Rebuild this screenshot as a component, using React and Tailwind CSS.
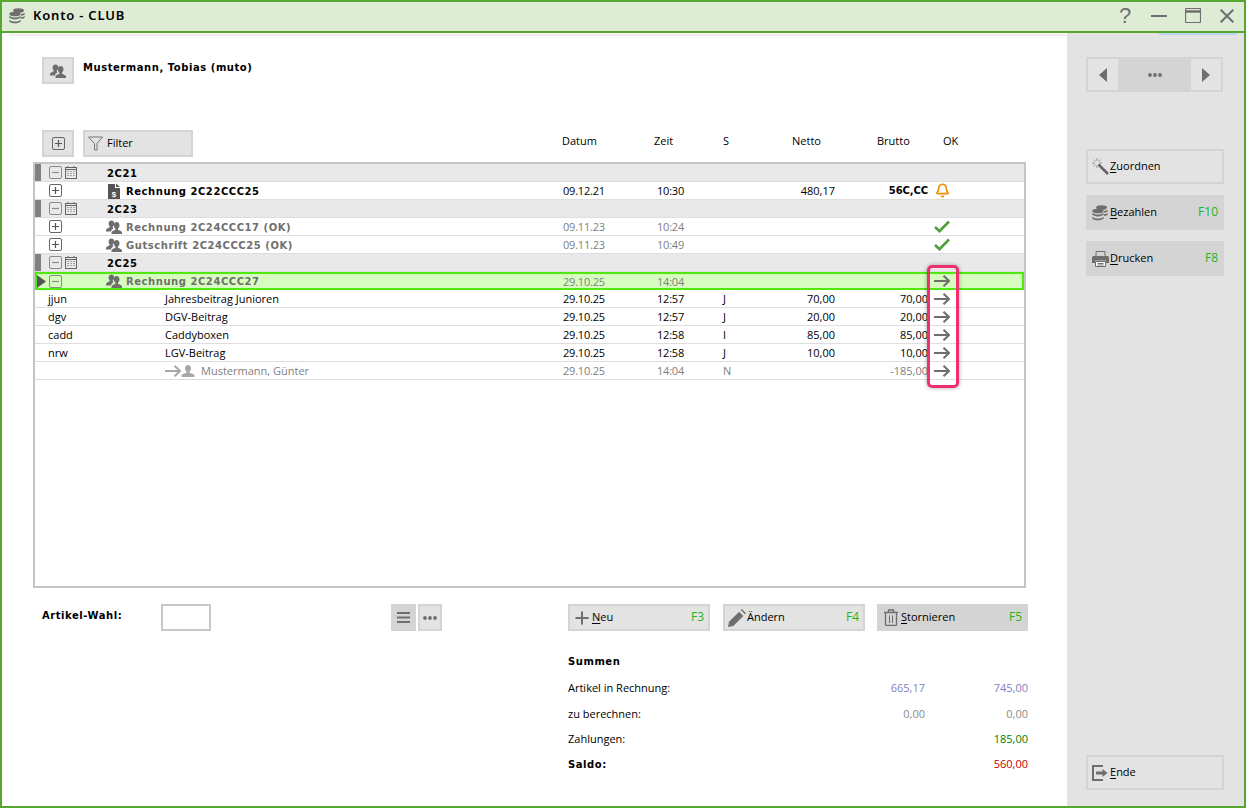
import React from 'react';
import { Bell, Plus } from 'lucide-react';

const G = '#6e6e6e';
const BOLD = "inline-block pt-[2px] font-['DejaVu_Sans',sans-serif] font-bold text-[10px] tracking-[0.55px]";

const Coins = ({ size = 16 }) => (
    <svg width={size} height={size} viewBox="0 0 16 16" fill={G}>
        <ellipse cx="9.500" cy="2.500" rx="5.500" ry="2.300" />
        <path d="M12 6c2-.2 3.300-.8 3.700-1.500v1.800c-.4.700-1.700 1.300-3.700 1.500zM12 9.200c2-.2 3.300-.8 3.700-1.500v1.800c-.4.700-1.700 1.300-3.700 1.500z" />
        <ellipse cx="6" cy="6" rx="5.700" ry="2.300" />
        <path d="M.3 7.800c.9 1.100 3 1.800 5.700 1.800s4.800-.7 5.700-1.800v1.800c-.9 1.100-3 1.800-5.700 1.800S1.200 10.700.3 9.600zM.3 11.700c.9 1.100 3 1.800 5.700 1.800s4.800-.7 5.700-1.800v1.800c-.9 1.100-3 1.800-5.700 1.800S1.200 14.600.3 13.500z" />
    </svg>
);

const Persons = ({ size = 16, color = G }) => (
    <svg width={size} height={size} viewBox="0 0 16 16" fill={color}>
        <path d="M5.500 1.500c1.700 0 2.700 1.300 2.700 3 0 1.300-.6 2.500-1.400 3.100v1.100l.9.5c-1.300.6-2.300 1.500-2.700 3.300H0v-1.600c0-1 2.300-1.800 3.800-2.600V7.600C3 7 2.600 5.800 2.600 4.500c0-1.700 1.200-3 2.900-3z" />
        <path d="M10.500 3c1.900 0 3 1.400 3 3.200 0 1.400-.6 2.700-1.500 3.300v1.300c1.500.7 4 1.400 4 2.700V15H5.500v-1.500c0-1.300 2.400-2 3.900-2.700V9.500c-.9-.6-1.600-1.900-1.600-3.300 0-1.800 1.100-3.200 2.700-3.200z" />
    </svg>
);

const Person = () => (
    <svg width="14" height="14" viewBox="0 0 14 14" fill="#a8a8a8">
        <path d="M7 1c1.900 0 3 1.400 3 3.200 0 1.400-.6 2.700-1.500 3.300v1.300c1.500.7 5 1.200 5 2.700V13H.5v-1.500c0-1.500 3.500-2 5-2.700V7.500C4.600 6.900 4 5.600 4 4.200 4 2.400 5.100 1 7 1z" />
    </svg>
);

const Invoice = () => (
    <svg width="12" height="16" viewBox="0 0 12 16">
        <path d="M0 1h7v4h5v11H0z" fill="#555" />
        <path d="M8 0.500l4 3.500H8z" fill="#555" />
        <text x="6" y="13.500" fontSize="8" fontWeight="700" textAnchor="middle" fill="#fff" fontFamily="Liberation Sans, sans-serif">$</text>
    </svg>
);

const Calendar = () => (
    <svg width="12" height="13" viewBox="0 0 12 13" fill="none" stroke="#666">
        <rect x="0.500" y="1.500" width="11" height="11" />
        <path d="M0.500 3.500h11M3 0v2M9 0v2" />
        <path d="M2.500 5.500h1M5.500 5.500h1M8.500 5.500h1M2.500 7.500h1M5.500 7.500h1M8.500 7.500h1M2.500 9.500h1M5.500 9.500h1M8.500 9.500h1" strokeWidth="1.200" />
    </svg>
);

const Toggle = ({ open, light }) => (
    <svg width="13" height="13" viewBox="0 0 13 13" fill="none" className="shrink-0">
        <rect x="0.500" y="0.500" width="12" height="12" rx="1.500" stroke={light ? '#8a8a8a' : '#666'} />
        <path d={open ? 'M3 6.500h7' : 'M3 6.500h7M6.500 3v7'} stroke={light ? '#8a8a8a' : '#555'} strokeWidth="1.200" />
    </svg>
);

const Funnel = () => (
    <svg width="15" height="15" viewBox="0 0 15 15" fill="none" stroke="#777">
        <path d="M0.500 1h14L9 7.500V14H6.500V7.500z" />
    </svg>
);

const Dots = () => (
    <svg width="14" height="4" viewBox="0 0 14 4" fill={G}>
        <circle cx="2" cy="2" r="1.900" />
        <circle cx="7" cy="2" r="1.900" />
        <circle cx="12" cy="2" r="1.900" />
    </svg>
);

const Wand = () => (
    <svg width="17" height="17" viewBox="0 0 17 17" fill="none" stroke="#666">
        <path d="M6.500 6.500L16 16" strokeWidth="2.600" />
        <path d="M5 0v3M5 7v3M0 5h3M7 5h3M1.500 1.500l2 2M8.500 1.500l-2 2M1.500 8.500l2-2" stroke="#999" />
    </svg>
);

const Printer = () => (
    <svg width="17" height="16" viewBox="0 0 17 16" fill={G}>
        <path d="M4 0.500h9V6H4z" fill="none" stroke={G} />
        <path d="M1.500 5h14A1.500 1.500 0 0 1 17 6.500V12h-3V9.500H3V12H0V6.500A1.500 1.500 0 0 1 1.500 5z" />
        <path d="M3.500 10.500h10v5h-10z" fill="#fff" stroke={G} />
        <path d="M5.500 12.500h6M5.500 14h6" stroke={G} />
    </svg>
);

const Pencil = () => (
    <svg width="18" height="18" viewBox="0 0 17 17" fill={G}>
        <path d="M0 17l1-5L10.500 2.500l4 4L5 16z" />
        <path d="M12 1l1-1 4 4-1 1z" />
    </svg>
);

const Trash = () => (
    <svg width="14" height="17" viewBox="0 0 14 17" fill="none" stroke={G}>
        <path d="M0 3.500h14M4.500 3V1h5v2" strokeWidth="1.300" />
        <path d="M1.500 4v11.500A1 1 0 0 0 2.500 16.500h9a1 1 0 0 0 1-1V4" strokeWidth="1.300" />
        <path d="M5.500 6.500V14M8.500 6.500V14" />
    </svg>
);

const Exit = () => (
    <svg width="16" height="16" viewBox="0 0 16 16" fill="none" stroke={G}>
        <path d="M11 1H1v14h10" strokeWidth="2" />
        <path d="M4 8h7" strokeWidth="3" />
        <path d="M10.500 4l5 4-5 4z" fill={G} stroke="none" />
    </svg>
);

const ArrowGlyph = ({ color = '#6e6e6e' }) => (
    <svg width="16" height="12" viewBox="0 0 16 12" fill="none" stroke={color} strokeWidth="2">
        <path d="M0 6h15M9.500 0.700L15 6l-5.500 5.300" />
    </svg>
);

const Ul = ({ children }) => <span className="underline underline-offset-2">{children}</span>;

const BTN = {
    outline: 'bg-[#e3e3e3] border-2 border-[#d4d4d4]',
    filled: 'bg-[#d4d4d4] border-2 border-[#d4d4d4]',
};

const Button = ({ icon, label, fkey, filled, className }) => (
    <div className={`${filled ? BTN.filled : BTN.outline} flex items-center pl-[2px] pr-[4px] ${className}`}>
        <span className="w-[20px] flex justify-center shrink-0">{icon}</span>
        <span className="flex-1 mb-[2px]">{label}</span>
        {fkey && <span className="text-[#22b522] text-[12px] mb-[1px]">{fkey}</span>}
    </div>
);

const Cell = ({ w, right, className = '', children }) => (
    <div className={`shrink-0 ${right ? 'text-right' : ''} ${className}`} style={{ width: w }}>{children}</div>
);

const YearRow = ({ year }) => (
    <div className="h-[18px] flex items-center bg-[#e9e9e9] border-b border-[#dedede]">
        <div className="w-[6px] h-full bg-[#808080]" />
        <div className="ml-[8px]"><Toggle open light /></div>
        <div className="ml-[3px] w-[13px] flex"><Calendar /></div>
        <span className={`ml-[29px] ${BOLD}`}>{year}</span>
    </div>
);

const Values = ({ date, time, s, netto, brutto, bruttoBold, ok, muted }) => (
    <>
        <Cell w={94} className={`tracking-[-0.2px] ${muted ? 'text-[#808080]' : ''}`}>{date}</Cell>
        <Cell w={66} className={`tracking-[-0.2px] ${muted ? 'text-[#808080]' : ''}`}>{time}</Cell>
        <Cell w={40} className={muted ? 'text-[#808080]' : ''}>{s}</Cell>
        <Cell w={72} right>{netto}</Cell>
        <Cell w={93} right className={bruttoBold ? "font-['DejaVu_Sans',sans-serif] font-bold text-[10px] tracking-[-0.1px]" : muted ? 'text-[#808080]' : ''}>{brutto}</Cell>
        <Cell w={28} className="flex justify-center">{ok}</Cell>
    </>
);

const Ok = () => (
    <svg width="16" height="13" viewBox="0 0 16 13" fill="none" stroke="#4fa03a" strokeWidth="2.600">
        <path d="M1 7l4.500 4.200L15 1.500" />
    </svg>
);

const DocRow = ({ icon, label, muted, selected, open, ...rest }) => (
    <div className={`h-[18px] flex items-center ${selected ? 'bg-[#d6fcc0] outline-2 -outline-offset-2 outline-[#4fe80f] relative' : 'border-b border-[#dedede]'}`}>
        <div className="w-[528px] flex items-center h-full">
            <div className="w-[14px] flex">
                {selected && (
                    <svg width="9" height="13" viewBox="0 0 9 13" className="ml-[2px]"><path d="M0 0l9 6.500L0 13z" fill="#555" /></svg>
                )}
            </div>
            <Toggle open={open} light={open} />
            <div className="ml-[40px] w-[24px] flex justify-center">{icon}</div>
            <span className={`${BOLD} ${muted ? 'text-[#6f6f6f]' : ''}`}>{label}</span>
        </div>
        <Values muted={muted} {...rest} />
    </div>
);

const ItemRow = ({ code, name, ...rest }) => (
    <div className="h-[18px] flex items-center border-b border-[#dedede]">
        <div className="w-[528px] flex items-center">
            <span className="ml-[13px] w-[117px]">{code}</span>
            <span>{name}</span>
        </div>
        <Values {...rest} />
    </div>
);

const Sum = ({ label, a, b, aColor, bColor, bold }) => (
    <div className="h-[25px] flex items-center">
        <span className={`flex-1 ${bold ? BOLD : ''}`}>{label}</span>
        <span className={`w-[100px] text-right ${aColor}`}>{a}</span>
        <span className={`w-[103px] text-right ${bColor}`}>{b}</span>
    </div>
);

export default function App() {
    return (
        <div className="w-[1246px] h-[808px] border-2 border-[#58a632] bg-white flex flex-col overflow-hidden text-black text-[11px] leading-none font-['Open_Sans',sans-serif]">

            {/* title bar */}
            <div className="h-[31px] shrink-0 bg-[#deecd6] border-b-2 border-[#58a632] flex items-center pl-[7px] pr-[10px] pb-[2px]">
                <Coins size={16} />
                <span className="ml-[8px] text-[13px] font-semibold font-['Noto_Sans',sans-serif] tracking-[0.8px]">Konto - CLUB</span>
                <div className="ml-auto flex items-center">
                    <span className="w-[14px] text-center text-[22px] text-[#6e6e6e] font-['Liberation_Sans',sans-serif]">?</span>
                    <svg width="16" height="2" viewBox="0 0 16 2" className="ml-[19px]"><path d="M0 0h16v2H0z" fill={G} /></svg>
                    <svg width="16" height="15" viewBox="0 0 16 15" fill="none" stroke={G} className="ml-[18px]">
                        <rect x="0.500" y="0.500" width="15" height="14" rx="1" strokeWidth="1.200" />
                        <path d="M0.500 3.500h15" strokeWidth="2.500" />
                    </svg>
                    <svg width="14" height="14" viewBox="0 0 14 14" fill="none" stroke={G} strokeWidth="2" className="ml-[19px]">
                        <path d="M0.700 0.700l12.600 12.600M13.300 0.700L0.700 13.300" />
                    </svg>
                </div>
            </div>

            <div className="flex flex-1 min-h-0">
                {/* main column */}
                <div className="w-[1065px] shrink-0 flex flex-col">
                    <div className="h-[2px] mt-[1px] ml-[7px] bg-[#efefef] shrink-0" />

                    <div className="flex items-center mt-[21px] ml-[40px]">
                        <div className="w-[32px] h-[27px] bg-[#e3e3e3] border-2 border-[#d4d4d4] flex items-center justify-center">
                            <Persons />
                        </div>
                        <span className={`ml-[9px] mb-[7px] ${BOLD}`}>Mustermann, Tobias (muto)</span>
                    </div>

                    {/* toolbar + column heads */}
                    <div className="flex items-center mt-[46px] ml-[40px] h-[27px]">
                        <div className="w-[32px] h-full bg-[#e3e3e3] border-2 border-[#d4d4d4] flex items-center justify-center">
                            <Toggle />
                        </div>
                        <div className="ml-[9px] w-[110px] h-full bg-[#e3e3e3] border-2 border-[#d4d4d4] flex items-center pl-[3px]">
                            <Funnel />
                            <span className="ml-[4px] mb-[2px]">Filter</span>
                        </div>
                        <div className="ml-[369px] flex mb-[6px]">
                            <span className="w-[92px]">Datum</span>
                            <span className="w-[69px]">Zeit</span>
                            <span className="w-[69px]">S</span>
                            <span className="w-[85px]">Netto</span>
                            <span className="w-[66px]">Brutto</span>
                            <span>OK</span>
                        </div>
                    </div>

                    {/* booking table */}
                    <div className="relative mt-[5px] ml-[31px] w-[993px] h-[426px] border-2 border-[#c4c4c4] shrink-0">
                        <YearRow year="2C21" />
                        <DocRow icon={<Invoice />} label={<span className="text-black">Rechnung 2C22CCC25</span>} date="09.12.21" time="10:30" netto="480,17" brutto="56C,CC" bruttoBold ok={<Bell size={15} color="#f28c00" strokeWidth={2.600} />} />
                        <YearRow year="2C23" />
                        <DocRow muted icon={<Persons />} label="Rechnung 2C24CCC17 (OK)" date="09.11.23" time="10:24" ok={<Ok />} />
                        <DocRow muted icon={<Persons />} label="Gutschrift 2C24CCC25 (OK)" date="09.11.23" time="10:49" ok={<Ok />} />
                        <YearRow year="2C25" />
                        <DocRow muted selected open icon={<Persons />} label="Rechnung 2C24CCC27" date="29.10.25" time="14:04" ok={<ArrowGlyph />} />
                        <ItemRow code="jjun" name="Jahresbeitrag Junioren" date="29.10.25" time="12:57" s="J" netto="70,00" brutto="70,00" ok={<ArrowGlyph />} />
                        <ItemRow code="dgv" name="DGV-Beitrag" date="29.10.25" time="12:57" s="J" netto="20,00" brutto="20,00" ok={<ArrowGlyph />} />
                        <ItemRow code="cadd" name="Caddyboxen" date="29.10.25" time="12:58" s="I" netto="85,00" brutto="85,00" ok={<ArrowGlyph />} />
                        <ItemRow code="nrw" name="LGV-Beitrag" date="29.10.25" time="12:58" s="J" netto="10,00" brutto="10,00" ok={<ArrowGlyph />} />
                        <div className="h-[18px] flex items-center border-b border-[#dedede]">
                            <div className="w-[528px] flex items-center text-[#808080]">
                                <div className="ml-[130px] flex items-center">
                                    <ArrowGlyph color="#a8a8a8" />
                                    <Person />
                                    <span className="ml-[6px]">Mustermann, Günter</span>
                                </div>
                            </div>
                            <Values muted date="29.10.25" time="14:04" s="N" brutto="-185,00" ok={<ArrowGlyph />} />
                        </div>

                        {/* red marker drawn over the arrow column */}
                        <div className="absolute left-[892px] top-[101px] w-[32px] h-[123px] rounded-[5px] border-[3px] border-[#f0306e] shadow-[0_0_4px_rgba(0,0,0,0.35)]" />
                    </div>

                    {/* article entry and buttons */}
                    <div className="flex items-center mt-[16px] ml-[40px] h-[27px]">
                        <span className={`${BOLD} w-[119px] mb-[5px]`}>Artikel-Wahl:</span>
                        <div className="w-[50px] h-full border-2 border-[#c8c8c8]" />
                        <div className="ml-[180px] w-[25px] h-full bg-[#d4d4d4] flex items-center justify-center">
                            <svg width="13" height="11" viewBox="0 0 13 11" fill={G}>
                                <path d="M0 0h13v2H0zM0 4.500h13v2H0zM0 9h13v2H0z" />
                            </svg>
                        </div>
                        <div className="ml-[2px] w-[24px] h-full bg-[#e3e3e3] border-2 border-[#d4d4d4] flex items-center justify-center">
                            <Dots />
                        </div>
                        <Button className="ml-[126px] w-[142px] h-full" icon={<Plus size={20} color={G} strokeWidth={2} absoluteStrokeWidth />} label={<><Ul>N</Ul>eu</>} fkey="F3" />
                        <Button className="ml-[13px] w-[142px] h-full" icon={<Pencil />} label={<>Ändern</>} fkey="F4" />
                        <Button filled className="ml-[12px] w-[151px] h-full" icon={<Trash />} label={<><Ul>S</Ul>tornieren</>} fkey="F5" />
                    </div>

                    {/* totals */}
                    <div className="ml-[566px] w-[460px] mt-[24px]">
                        <div className={`${BOLD} h-[14px]`}>Summen</div>
                        <div className="mt-[6px]">
                            <div className="mb-[1px]">
                                <Sum label="Artikel in Rechnung:" a="665,17" b="745,00" aColor="text-[#7f7fbf]" bColor="text-[#7f7fbf]" />
                            </div>
                            <Sum label="zu berechnen:" a="0,00" b="0,00" aColor="text-[#8c8c8c]" bColor="text-[#8c8c8c]" />
                            <Sum label="Zahlungen:" b="185,00" bColor="text-[#008000]" />
                            <Sum label="Saldo:" bold b="560,00" bColor="text-[#c00000]" />
                        </div>
                    </div>
                </div>

                {/* right panel */}
                <div className="w-[177px] shrink-0 bg-[#e3e3e3] flex flex-col pl-[19px]">
                    <div className="h-[2px] ml-[73px] w-[78px] bg-[#b9d6ee] shrink-0" />
                    <div className="mt-[22px] w-[137px] h-[35px] bg-[#d4d4d4] p-[2px] flex justify-between">
                        <div className="w-[30px] bg-[#e3e3e3] flex items-center justify-center">
                            <svg width="8" height="14" viewBox="0 0 8 14"><path d="M8 0v14L0 7z" fill={G} /></svg>
                        </div>
                        <div className="flex items-center"><Dots /></div>
                        <div className="w-[30px] bg-[#e3e3e3] flex items-center justify-center">
                            <svg width="8" height="14" viewBox="0 0 8 14"><path d="M0 0v14l8-7z" fill={G} /></svg>
                        </div>
                    </div>
                    <Button className="mt-[57px] w-[138px] h-[35px]" icon={<Wand />} label={<><Ul>Z</Ul>uordnen</>} />
                    <Button filled className="mt-[11px] w-[138px] h-[35px]" icon={<Coins size={16} />} label={<><Ul>B</Ul>ezahlen</>} fkey="F10" />
                    <Button filled className="mt-[11px] w-[138px] h-[35px]" icon={<Printer />} label={<><Ul>D</Ul>rucken</>} fkey="F8" />
                    <Button className="mt-auto mb-[16px] w-[138px] h-[35px]" icon={<Exit />} label={<><Ul>E</Ul>nde</>} />
                </div>
            </div>
        </div>
    );
}
